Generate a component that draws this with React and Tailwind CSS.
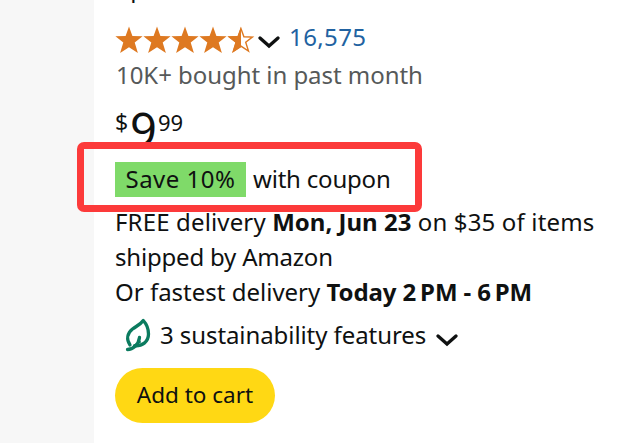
const STAR = "M14 0.5 L17.4 10 L27.6 10.2 L19.7 16.4 L22.9 26.9 L14 21.2 L5.1 26.9 L8.3 16.4 L0.4 10.2 L10.6 10 Z";
const STAR_OUTLINE = "M14 2.8 L16.9 10.8 L25.4 11.1 L18.7 16.3 L21.5 25.1 L14 20.2 L6.5 25.1 L9.3 16.3 L2.6 11.1 L11.1 10.8 Z";

function Star({ half }) {
  return (
    <svg viewBox="0 0 28 28" className="h-7 w-7 shrink-0" fill="none">
      {half ? (
        <>
          <path d={STAR_OUTLINE} stroke="#de7921" strokeWidth="1.4" />
          <path d="M14 0.5 L10.6 10 L0.4 10.2 L8.3 16.4 L5.1 26.9 L14 21.2 Z" fill="#de7921" />
        </>
      ) : (
        <path d={STAR} fill="#de7921" />
      )}
    </svg>
  );
}

function Chevron() {
  return (
    <svg viewBox="0 0 22 14" className="h-[14px] w-[22px] shrink-0" fill="none">
      <path d="M2 3 L11 11 L20 3" stroke="#0f1111" strokeWidth="3.3" strokeLinecap="round" />
    </svg>
  );
}

function Leaf() {
  return (
    <svg viewBox="0 0 26 34" className="h-[34px] w-[26px] shrink-0" fill="none" stroke="#0b7b5f" strokeWidth="3.3" strokeLinecap="round" strokeLinejoin="round">
      <path d="M5 27 C1 21 2.5 15 7.5 11 C11.5 8 15.5 6.500 18.300 2.500 C21.500 6 23.500 10 23.500 16 C23.500 24 17 28.300 9.500 27.700" />
      <path d="M2.500 31.500 C8 31.500 13.500 27 14.500 19.500" />
      <path d="M11.500 26 L15 24" strokeWidth="2" />
    </svg>
  );
}

export default function App() {
  return (
    <div className="flex h-[443px] w-[637px] overflow-hidden bg-white font-['Noto_Sans',sans-serif] text-[24px] leading-[35px] text-[#0f1111]">
      <div className="w-[94px] shrink-0 bg-[#f7f7f7]" />

      <div className="relative flex flex-1 flex-col pl-[21px] whitespace-nowrap">
        {/* Tail of the product title */}
        <div className="flex h-[22px] shrink-0 items-start pl-[2px]">
          <span className="-mt-[30px]">Sp</span>
        </div>

        <div className="flex h-[35px] shrink-0 items-center">
          <div className="flex">
            <Star />
            <Star />
            <Star />
            <Star />
            <Star half />
          </div>
          <div className="ml-[3px] pt-1">
            <Chevron />
          </div>
          <span className="ml-[9px] pb-[6px] tracking-[0.4px] text-[#2162a1]">16,575</span>
        </div>

        <div className="h-[42px] shrink-0 pl-px tracking-[-0.05px] text-[#565959]">10K+ bought in past month</div>

        <div className="flex h-[63px] shrink-0 items-start">
          <span className="w-[15px] pt-[6px] text-[23px]">$</span>
          <span className="w-[28px] text-[47px] leading-[61px]">9</span>
          <span className="pt-[6px] text-[22px]">99</span>
        </div>

        <div className="flex h-[35px] shrink-0 items-center">
          <span className="flex h-[35px] w-[131px] items-center justify-center bg-[#7fda69] pb-[2px] tracking-[0.5px]">Save 10%</span>
          <span className="ml-[7px] pb-[2px] tracking-[-0.2px]">with coupon</span>
        </div>

        <div className="mt-[7px] shrink-0">
          <div>
            <span className="tracking-[0.15px]">FREE delivery </span>
            <b>Mon, Jun 23</b>
            <span className="tracking-[0.15px]"> on $35 of items</span>
          </div>
          <div className="tracking-[-0.2px]">shipped by Amazon</div>
          <div>
            <span>Or fastest delivery </span>
            <b className="tracking-[-0.1px]">Today 2&#8201;PM - 6&#8201;PM</b>
          </div>
        </div>

        <div className="mt-[4px] flex h-[44px] shrink-0 items-center pl-[10px]">
          <Leaf />
          <span className="ml-[9px] pb-px tracking-[-0.08px]">3 sustainability features</span>
          <div className="ml-[10px] pt-[10px]">
            <Chevron />
          </div>
        </div>

        <button className="mt-[11px] flex h-[55px] w-[160px] shrink-0 items-center justify-center rounded-full bg-[#ffd814] pb-[2px] text-[22.5px]">Add to cart</button>

        <div className="absolute top-[142px] -left-[17px] h-[70px] w-[345px] rounded-[7px] border-[7px] border-[#fc3a3a]" />
      </div>
    </div>
  );
}
